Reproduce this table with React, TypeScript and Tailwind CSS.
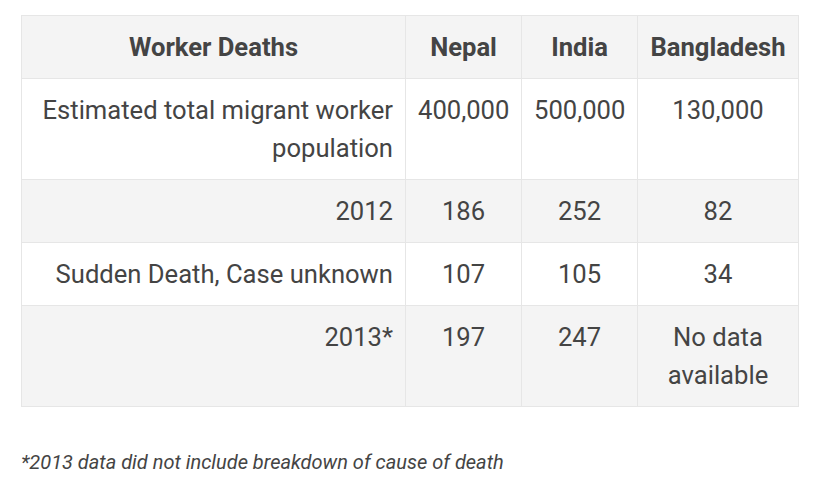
const rows = [
  { label: "Estimated total migrant worker population", nepal: "400,000", india: "500,000", bd: "130,000" },
  { label: "2012", nepal: "186", india: "252", bd: "82" },
  { label: "Sudden Death, Case unknown", nepal: "107", india: "105", bd: "34" },
  { label: "2013*", nepal: "197", india: "247", bd: "No data available" },
];

export default function App() {
  return (
    <div className="bg-white min-h-screen pt-[15px] pl-[21px] text-[#444444]" style={{ fontFamily: "Roboto, 'Liberation Sans', sans-serif" }}>
      <table className="table-fixed border-collapse w-[777px] text-[25.6px] leading-[38px]">
        <colgroup>
          <col className="w-[384px]" />
          <col className="w-[116px]" />
          <col className="w-[116px]" />
          <col className="w-[161px]" />
        </colgroup>
        <thead>
          <tr className="bg-[#f4f4f4]">
            <th className="border border-[#e6e6e6] px-3 py-3 font-bold text-center">Worker Deaths</th>
            <th className="border border-[#e6e6e6] px-3 py-3 font-bold text-center">Nepal</th>
            <th className="border border-[#e6e6e6] px-3 py-3 font-bold text-center">India</th>
            <th className="border border-[#e6e6e6] px-3 py-3 font-bold text-center">Bangladesh</th>
          </tr>
        </thead>
        <tbody>
          {rows.map((r, i) => (
            <tr key={i} className={i % 2 === 0 ? "bg-white" : "bg-[#f4f4f4]"}>
              <td className="border border-[#e6e6e6] px-3 py-3 text-right align-top">{r.label}</td>
              <td className="border border-[#e6e6e6] px-3 py-3 text-center align-top">{r.nepal}</td>
              <td className="border border-[#e6e6e6] px-3 py-3 text-center align-top">{r.india}</td>
              <td className="border border-[#e6e6e6] px-3 py-3 text-center align-top">{r.bd}</td>
            </tr>
          ))}
        </tbody>
      </table>
      <p className="mt-[41px] text-[20px] leading-[28px] italic">*2013 data did not include breakdown of cause of death</p>
    </div>
  );
}
